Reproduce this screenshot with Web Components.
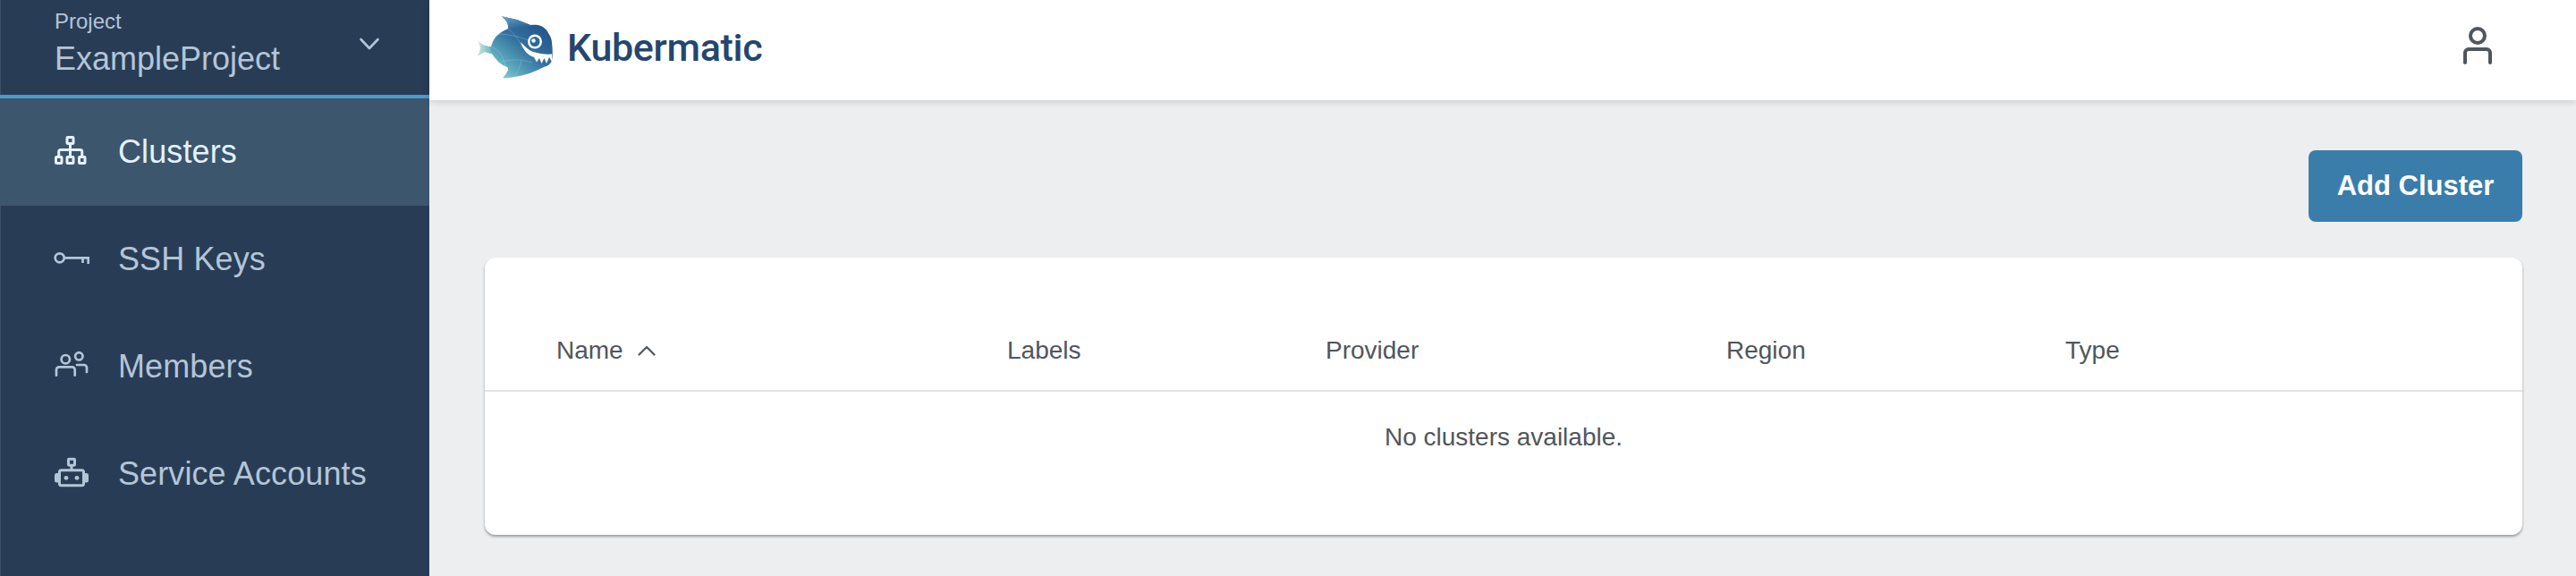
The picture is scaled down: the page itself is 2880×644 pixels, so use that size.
<!DOCTYPE html>
<html><head><meta charset="utf-8"><style>
html,body{margin:0;padding:0;height:644px;overflow:hidden;background:#edeef0;font-family:"Liberation Sans",Arial,sans-serif}
</style></head><body>
<kb-app>
  <kb-sidebar slot="side">
    <kb-project label="Project" name="ExampleProject"></kb-project>
    <kb-nav icon="clusters" active>Clusters</kb-nav>
    <kb-nav icon="key">SSH Keys</kb-nav>
    <kb-nav icon="members">Members</kb-nav>
    <kb-nav icon="robot">Service Accounts</kb-nav>
  </kb-sidebar>
  <kb-header slot="head"></kb-header>
  <kb-toolbar slot="main"><kb-button>Add Cluster</kb-button></kb-toolbar>
  <kb-card slot="main">
    <kb-table empty="No clusters available.">
      <kb-th w="504" sorted>Name</kb-th>
      <kb-th w="356">Labels</kb-th>
      <kb-th w="448">Provider</kb-th>
      <kb-th w="379">Region</kb-th>
      <kb-th>Type</kb-th>
    </kb-table>
  </kb-card>
</kb-app>
<script>
const ICONS={
clusters:`<g transform="translate(1 2)" fill="none" stroke="currentColor" stroke-width="3" stroke-linejoin="round"><rect x="14" y="1.5" width="7" height="7" rx=".8"/><rect x="1.5" y="23.5" width="6.5" height="7" rx=".8"/><rect x="14" y="23.5" width="7" height="7" rx=".8"/><rect x="27.5" y="23.5" width="6.5" height="7" rx=".8"/><path d="M17.5 8.5V23.5M4.75 23.5V17.5a2 2 0 0 1 2-2H28.75a2 2 0 0 1 2 2V23.5"/></g>`,
key:`<g transform="translate(0 12)" fill="none" stroke="currentColor" stroke-width="2.7"><circle cx="6.7" cy="6.3" r="5"/><path d="M11.7 6.3H40M38.7 6.3V13M32.5 6.3V12"/></g>`,
members:`<g fill="none" stroke="currentColor" stroke-width="2.7" stroke-linecap="round"><circle cx="13.3" cy="11.7" r="4.7"/><circle cx="28.3" cy="8.3" r="4.2"/><path d="M3 29.7V23.3a3 3 0 0 1 3-3H20.7a3 3 0 0 1 3 3V29.7"/><path d="M26 18H34a3 3 0 0 1 3 3V26"/></g>`,
robot:`<g fill="none" stroke="currentColor" stroke-width="3" stroke-linejoin="round"><rect x="16.5" y="3.2" width="7" height="7" rx=".6"/><path d="M20 10.2V15"/><rect x="6.5" y="15.8" width="27" height="17" rx="2"/></g><path d="M5 19H3.5A2.5 2.5 0 0 0 1 21.5V27A2.5 2.5 0 0 0 3.5 29.5H5ZM35 19h1.5A2.5 2.5 0 0 1 39 21.5V27a2.5 2.5 0 0 1-2.5 2.5H35Z" fill="currentColor"/><circle cx="14" cy="24.3" r="2.4" fill="currentColor"/><circle cx="26" cy="24.3" r="2.4" fill="currentColor"/>`
};
function def(name,html){customElements.define(name,class extends HTMLElement{
  constructor(){super();this.attachShadow({mode:"open"});}
  connectedCallback(){this.shadowRoot.innerHTML=typeof html==="function"?html(this):html;}
});}
def("kb-app",`<style>:host{display:grid;grid-template-columns:480px 1fr;grid-template-rows:112px 1fr;height:644px;width:2880px}
.s{grid-row:1/3;display:block;min-height:0;overflow:hidden}.h{position:relative;z-index:1}.m{display:flex;flex-direction:column;padding:56px 60px 0 62px;min-height:0}</style>
<div class="s"><slot name="side"></slot></div><div class="h"><slot name="head"></slot></div><div class="m"><slot name="main"></slot></div>`);
def("kb-sidebar",`<style>:host{display:flex;flex-direction:column;height:644px;background:#283d55;box-shadow:inset 1px 0 0 #3c4f66}</style><slot></slot>`);
def("kb-project",e=>`<style>:host{display:flex;box-sizing:border-box;height:110px;border-bottom:4px solid #4a9bd0;padding:0 55px 0 61px;align-items:flex-start;justify-content:space-between;color:#b4c5d8}
.l{font-size:24px;line-height:28px;margin-top:10px}.n{font-size:36px;line-height:42px;margin-top:7px;}svg{margin-top:42px;display:block}</style>
<div><div class="l">${e.getAttribute("label")}</div><div class="n">${e.getAttribute("name")}</div></div>
<svg width="24" height="14" viewBox="0 0 24 14" fill="none" stroke="currentColor" stroke-width="2.6" stroke-linecap="round" stroke-linejoin="round"><path d="M2.5 2L12 12L21.5 2"/></svg>`);
def("kb-nav",e=>{const a=e.hasAttribute("active"),i=e.getAttribute("icon");return `<style>:host{display:flex;align-items:center;height:120px;padding-left:60px;font-size:36px;color:${a?"#e3f2fb":"#b4c5d8"};${a?"background:#3c566d":""}}
svg{display:block;margin-right:32px;flex:none}.t{letter-spacing:.1px}</style>
<svg width="40" height="40" viewBox="0 0 40 40">${ICONS[i]}</svg><span class="t"><slot></slot></span>`});
def("kb-header",`<style>:host{display:flex;align-items:center;justify-content:space-between;box-sizing:border-box;height:112px;background:#fff;box-shadow:0 2px 8px rgba(0,0,0,.14);padding:0 94px 0 53px}
.b{display:flex;align-items:center;gap:16px;font:500 43px Roboto,sans-serif;color:#24466f;letter-spacing:-.3px;padding-bottom:6px}.logo{display:block}.u{display:block;color:#50565c;margin-top:-10px}</style>
<div class="b"><svg class="logo" width="85" height="70" viewBox="0 0 85 70"><defs>
<linearGradient id="g" x1=".1" y1=".95" x2=".9" y2=".15"><stop offset="0" stop-color="#aeded3"/><stop offset=".3" stop-color="#59a8bd"/><stop offset=".6" stop-color="#34729f"/><stop offset="1" stop-color="#235289"/></linearGradient>
<linearGradient id="f" x1="0" y1="0" x2=".6" y2="1"><stop offset="0" stop-color="#6aa8c6"/><stop offset="1" stop-color="#2b6296"/></linearGradient>
<linearGradient id="t" x1="0" y1="0" x2="1" y2="0"><stop offset="0" stop-color="#cfe8df"/><stop offset="1" stop-color="#66b3c2"/></linearGradient></defs>
<path d="M28 .3C35 2 42 3 47 4.700C52 6.500 56 8.500 60 10C65 9.500 69 10 72 11C76 13 79 16 80 19C83 23 84 27 84 30C85 37 85 44 84 50C82 54 79 56 75 57C69 60 64 62 59 64C53 66 47 67 42 68C37 69 33 69.500 29 69C32 66 34 63 35 60C35 58.500 35 58 34 57C31 56 28 54 25 52C22 49 19 45 17 42C13 41.500 10 40 9 40C6 41 3 43 1 45C3 42 4 38 4 35C4 32 3 30 1 28C4 31 7 32 9 33C12 34 14 34 16 34C17 31 18 28 20 25C23 21 26 19 29 17C31 16 33 15 35 14C35 11 35 9 34 7C32 4 30 2 28 .3Z" fill="url(#g)"/>
<path d="M28 .3C35 2 42 3 47 4.700C52 6.500 56 8.500 60 10C52 14 44 15 35 14C35 11 35 9 34 7C32 4 30 2 28 .3Z" fill="url(#f)"/>
<path d="M1 28C4 31 7 32 9 33C12 34 14 34 16 34C15 37 16 40 17 42C13 41.500 10 40 9 40C6 41 3 43 1 45C3 42 4 38 4 35C4 32 3 30 1 28Z" fill="url(#t)"/>
<path d="M24 20C35 20 46 23 58 27M35 14C43 20 49 30 51 36M16 34C23 37 29 42 32 56M24 52C38 48 50 48 62 52M42 68C46 63 48 56 50 50" fill="none" stroke="#a9cfdc" stroke-opacity=".4" stroke-width=".8"/>
<circle cx="65" cy="28.500" r="8" fill="#fff"/><circle cx="65" cy="28.500" r="5.500" fill="#2d6799"/><circle cx="63.500" cy="27.500" r="2.200" fill="#fff"/>
<path d="M49 29C54 34 58 38 63 40C70 42 77 43 84 42.500L84 51L81 46L78 53L75.500 47L72.500 53L70 47L67 51.500L64 46C57 44 52 38 49 29Z" fill="#fff"/></svg><span>Kubermatic</span></div>
<svg class="u" width="32" height="42" viewBox="0 0 32 42" fill="none" stroke="currentColor" stroke-width="4" stroke-linecap="round"><circle cx="16" cy="10" r="8"/><path d="M2 40V29a4 4 0 0 1 4-4H26a4 4 0 0 1 4 4V40"/></svg>`);
def("kb-toolbar",`<style>:host{display:flex;justify-content:flex-end;height:80px;margin-bottom:40px}</style><slot></slot>`);
def("kb-button",`<style>:host{display:flex;align-items:center;justify-content:center;width:239px;height:80px;background:#3a7daa;border-radius:8px;color:#fff;font-size:31px;font-weight:700}</style><slot></slot>`);
def("kb-card",`<style>:host{display:block;height:310px;background:#fff;border-radius:12px;box-shadow:0 2px 3px rgba(0,0,0,.35)}</style><slot></slot>`);
def("kb-table",e=>`<style>:host{display:block}.h{display:flex;align-items:flex-end;box-sizing:border-box;height:150px;padding:0 0 0 80px;border-bottom:2px solid #e3e3e3}::slotted(*){margin-bottom:28px}
.e{text-align:center;font-size:28px;line-height:32px;color:#50565c;padding-top:35px}</style><div class="h"><slot></slot></div><div class="e">${e.getAttribute("empty")}</div>`);
def("kb-th",e=>`<style>:host{display:flex;align-items:center;font-size:28px;line-height:32px;color:#50565c;${e.getAttribute("w")?`width:${e.getAttribute("w")}px`:""}}svg{margin-left:16px;display:block}</style><slot></slot>${e.hasAttribute("sorted")?`<svg width="20" height="12" viewBox="0 0 20 12" fill="none" stroke="currentColor" stroke-width="2.2" stroke-linecap="round" stroke-linejoin="round"><path d="M1.5 10.5L10 2L18.5 10.5"/></svg>`:""}`);
</script></body></html>
